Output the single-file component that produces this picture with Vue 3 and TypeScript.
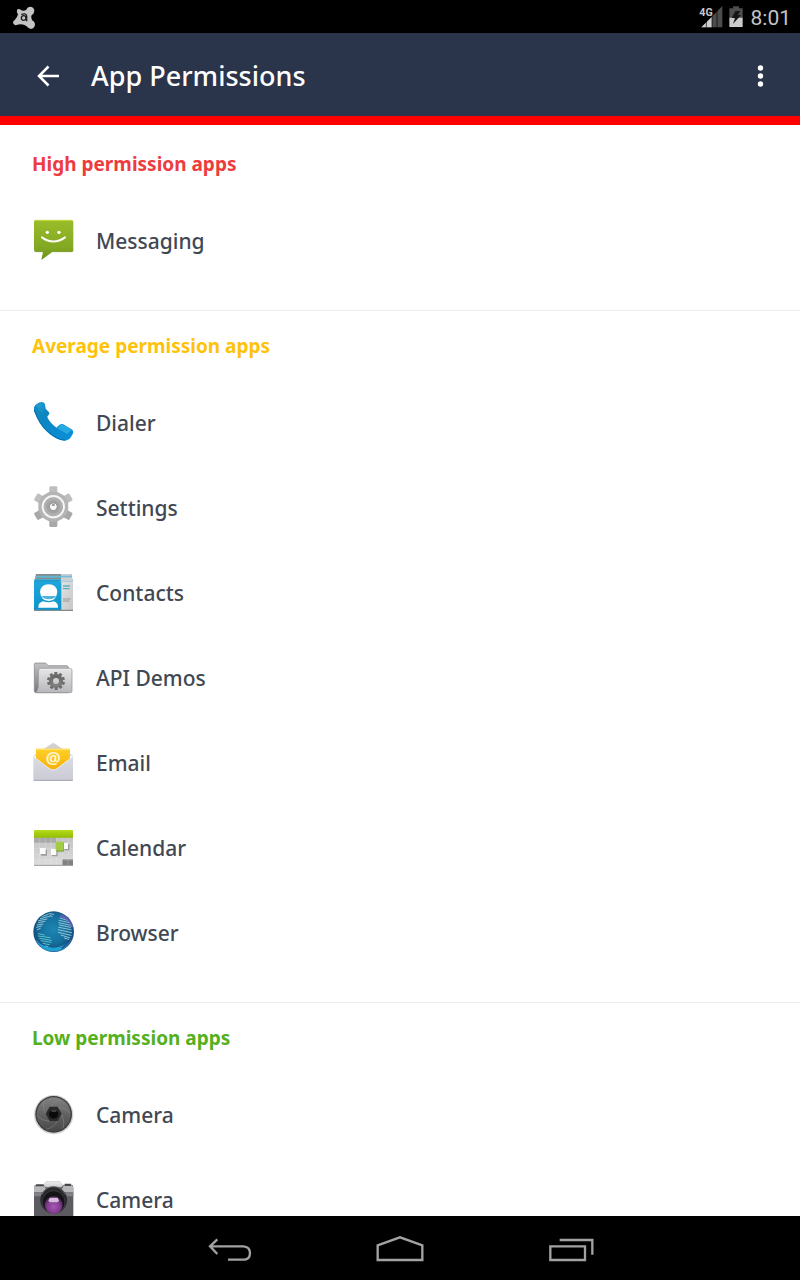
<script setup lang="ts">
type IconName =
  | 'messaging' | 'dialer' | 'settings' | 'contacts' | 'api'
  | 'email' | 'calendar' | 'browser' | 'lens' | 'camera'

interface AppEntry {
  name: string
  icon: IconName
  box: string
}

interface Group {
  title: string
  level: 'high' | 'average' | 'low'
  apps: AppEntry[]
}

const groups: Group[] = [
  {
    title: 'High permission apps',
    level: 'high',
    apps: [{ name: 'Messaging', icon: 'messaging', box: '36 234 132 132' }],
  },
  {
    title: 'Average permission apps',
    level: 'average',
    apps: [
      { name: 'Dialer', icon: 'dialer', box: '36 30 132 132' },
      { name: 'Settings', icon: 'settings', box: '36 285 132 132' },
      { name: 'Contacts', icon: 'contacts', box: '24 30 132 132' },
      { name: 'API Demos', icon: 'api', box: '24 15 132 132' },
      { name: 'Email', icon: 'email', box: '24 15 132 132' },
      { name: 'Calendar', icon: 'calendar', box: '24 15 132 132' },
      { name: 'Browser', icon: 'browser', box: '24 30 132 132' },
    ],
  },
  {
    title: 'Low permission apps',
    level: 'low',
    apps: [
      { name: 'Camera', icon: 'lens', box: '24 21 132 132' },
      { name: 'Camera', icon: 'camera', box: '24 21 132 132' },
    ],
  },
]

const sixth: number[] = [0, 60, 120, 180, 240, 300]
const tenth: number[] = [0, 36, 72, 108, 144, 180, 216, 252, 288, 324]
</script>

<template>
  <div class="screen">
    <svg class="defs" width="0" height="0" aria-hidden="true">
      <defs>
        <linearGradient id="g-msg" x1="0" y1="0" x2="0" y2="1">
          <stop offset="0" stop-color="#9abd2a" /><stop offset="0.7" stop-color="#82a822" /><stop offset="1" stop-color="#6a8f1c" />
        </linearGradient>
        <linearGradient id="g-phone" x1="0" y1="0" x2="0.8" y2="1">
          <stop offset="0" stop-color="#1689bd" /><stop offset="0.45" stop-color="#0b86c4" /><stop offset="1" stop-color="#0a8fd6" />
        </linearGradient>
        <linearGradient id="g-phone-top" x1="0" y1="0" x2="1" y2="1">
          <stop offset="0" stop-color="#25a4d6" /><stop offset="1" stop-color="#0a7dba" />
        </linearGradient>
        <linearGradient id="g-contact" x1="0" y1="0" x2="0" y2="1">
          <stop offset="0" stop-color="#1ea6dc" /><stop offset="1" stop-color="#0b93cb" />
        </linearGradient>
        <linearGradient id="g-page" x1="0" y1="0" x2="1" y2="1">
          <stop offset="0" stop-color="#e4e4e4" /><stop offset="1" stop-color="#c6c6c6" />
        </linearGradient>
        <linearGradient id="g-back" x1="0" y1="0" x2="0" y2="1">
          <stop offset="0" stop-color="#c2c2c4" /><stop offset="1" stop-color="#77777a" />
        </linearGradient>
        <linearGradient id="g-front" x1="0" y1="0" x2="0" y2="1">
          <stop offset="0" stop-color="#e6e6e8" /><stop offset="1" stop-color="#b8b8bc" />
        </linearGradient>
        <linearGradient id="g-mini" gradientUnits="userSpaceOnUse" x1="0" y1="66" x2="0" y2="120">
          <stop offset="0" stop-color="#5c5c5c" /><stop offset="1" stop-color="#8e8e8e" />
        </linearGradient>
        <linearGradient id="g-mail" x1="0" y1="0" x2="0" y2="1">
          <stop offset="0" stop-color="#ffd02a" /><stop offset="1" stop-color="#f5ad00" />
        </linearGradient>
        <linearGradient id="g-env" x1="0" y1="0" x2="0" y2="1">
          <stop offset="0" stop-color="#dcdce4" /><stop offset="1" stop-color="#cacad4" />
        </linearGradient>
        <linearGradient id="g-cal" x1="0" y1="0" x2="0" y2="1">
          <stop offset="0" stop-color="#b5dc1a" /><stop offset="1" stop-color="#93bd05" />
        </linearGradient>
        <linearGradient id="g-grid" x1="0" y1="0" x2="0" y2="1">
          <stop offset="0" stop-color="#c2c2c2" /><stop offset="1" stop-color="#dcdcdc" />
        </linearGradient>
        <radialGradient id="g-globe" cx="0.5" cy="0.45" r="0.56">
          <stop offset="0" stop-color="#1c86b4" /><stop offset="0.6" stop-color="#156e9c" /><stop offset="0.9" stop-color="#15507e" /><stop offset="1" stop-color="#2d6a94" />
        </radialGradient>
        <linearGradient id="g-lens" x1="0" y1="0" x2="0" y2="1">
          <stop offset="0" stop-color="#828282" /><stop offset="0.5" stop-color="#626262" /><stop offset="1" stop-color="#484848" />
        </linearGradient>
        <radialGradient id="g-violet" cx="0.5" cy="0.6" r="0.55">
          <stop offset="0" stop-color="#a858b8" /><stop offset="0.7" stop-color="#7d3a8c" /><stop offset="1" stop-color="#4a2052" />
        </radialGradient>
        <linearGradient id="g-top" x1="0" y1="0" x2="0" y2="1">
          <stop offset="0" stop-color="#f0f0f0" /><stop offset="1" stop-color="#c8c8ca" />
        </linearGradient>
      </defs>
    </svg>

    <div class="status">
      <svg class="badge" viewBox="36 12 72 72" aria-hidden="true">
        <path d="M52 25 Q58 22 64 28 Q72 31 79 26 Q82 17 92 17 Q103 19 103 30 Q102 39 95 42 Q91 49 96 58 Q105 62 105 72 Q103 83 93 84 Q84 83 80 76 Q73 70 62 70 Q54 70 50 72 Q42 74 39 66 Q39 59 45 56 Q52 50 54 40 Q48 32 52 25Z" fill="#c4c4c4" />
        <circle cx="71" cy="51" r="7" fill="none" stroke="#1c1c1c" stroke-width="4" />
        <path d="M64 40Q80 35 80 46V61" fill="none" stroke="#1c1c1c" stroke-width="4" />
      </svg>
      <div class="status-right">
        <svg class="signal" viewBox="57 15 72 66" aria-hidden="true">
          <path d="M64 79L127 15V79Z" fill="#4c4c4c" />
          <path d="M64 79L96 47V79Z" fill="#d0d0d0" />
          <path d="M79 50V79M96 35V79M111 20V79" stroke="#000" stroke-width="2" />
          <rect x="57" y="15" width="38" height="32" fill="#000" />
          <text x="58" y="44" class="net">4G</text>
        </svg>
        <svg class="battery" viewBox="144 15 48 66" aria-hidden="true">
          <path d="M159 16H177V22H188V50H148V22H159Z" fill="#4e4e4e" />
          <path d="M148 50H188V78H148Z" fill="#cacaca" />
          <path d="M166 30L181 30L174 42H183L159 69L165 51H155Z" fill="#161616" />
        </svg>
        <span class="clock">8:01</span>
      </div>
    </div>

    <header class="bar">
      <button class="icon-button back" type="button" aria-label="Back">
        <svg viewBox="0 0 24 24" class="bar-icon" aria-hidden="true">
          <path d="M12.5 2.5L3 12L12.5 21.5M3 12H23" fill="none" stroke="#fff" stroke-width="2.5" />
        </svg>
      </button>
      <h1>App Permissions</h1>
      <button class="icon-button more" type="button" aria-label="More options">
        <svg viewBox="0 0 24 24" class="bar-icon" aria-hidden="true">
          <g fill="#fff"><circle cx="12.5" cy="4" r="2.7" /><circle cx="12.5" cy="12" r="2.7" /><circle cx="12.5" cy="20" r="2.7" /></g>
        </svg>
      </button>
    </header>

    <main class="list">
      <section v-for="group in groups" :key="group.title" class="group">
        <h2 :class="group.level">{{ group.title }}</h2>
        <ul>
          <li v-for="(app, i) in group.apps" :key="i">
            <svg class="app-icon" :viewBox="app.box" aria-hidden="true">
              <g v-if="app.icon === 'messaging'">
                <path d="M48 240H154Q160 240 160 246V329Q160 335 154 335H98L64 360L69 335H48Q42 335 42 329V246Q42 240 48 240Z" fill="url(#g-msg)" />
                <path d="M47 241H155" stroke="#c9dc3a" stroke-width="3" />
                <path d="M43 333Q45 335 49 335H69M98 335H154Q158 335 160 332" fill="none" stroke="#6a8c1e" stroke-width="2" />
                <circle cx="82" cy="277" r="5" fill="#fff" /><circle cx="117" cy="277" r="5" fill="#fff" />
                <path d="M66 292Q100 317 135 292" fill="none" stroke="#fff" stroke-width="6" stroke-linecap="round" />
              </g>
              <g v-else-if="app.icon === 'dialer'">
                <path d="M42 52Q48 38 66 36Q73 37 75 43L77 56L87 67Q90 71 86 75Q80 78 83 84Q92 101 110 113Q116 103 128 102L157 119Q162 127 156 136Q148 153 132 152Q105 148 81 125Q57 104 42 63Z" fill="url(#g-phone)" />
                <path d="M48 48Q54 39 66 38Q72 39 73 44L75 57L85 68Q80 72 76 76L58 62Z" fill="url(#g-phone-top)" />
                <path d="M113 116Q117 104 128 103L157 120Q147 124 142 132Z" fill="#27a9e2" />
                <path d="M43 60Q58 103 84 125Q112 150 135 150" fill="none" stroke="#0670a8" stroke-width="3" />
              </g>
              <g v-else-if="app.icon === 'settings'">
                <path v-for="a in sixth" :key="a" d="M80 314L88 305V292Q89 289 92 289H108Q112 289 112 292V305L120 314Z" :transform="`rotate(${a} 100 350)`" :fill="a > 60 && a < 300 ? '#a8a8a8' : '#bebebe'" />
                <circle cx="100" cy="350" r="45" fill="#b4b4b4" />
                <circle cx="100" cy="350" r="32" fill="#b0b0b0" stroke="#f6f6f6" stroke-width="6" />
                <circle cx="100" cy="350" r="21" fill="#a4a4a4" />
                <circle cx="100" cy="350" r="12" fill="#f8f8f8" stroke="#8c8c8c" stroke-width="3" />
                <path d="M96 341H104V348H96Z" fill="#9c9c9c" />
              </g>
              <g v-else-if="app.icon === 'contacts'">
                <path d="M36 42H144V58H33Z" fill="#858b8e" />
                <path d="M35 47H143V53H34Z" fill="#62b6d2" />
                <path d="M31 58H146V66H30Z" fill="#1c9bcb" />
                <path d="M111 42H143L146 64H111Z" fill="#cbd1d3" /><path d="M111 47H144V52H111Z" fill="#70bdd5" />
                <path d="M108 64H147V151H108Z" fill="url(#g-page)" />
                <path d="M30 65H112V151H30Z" fill="url(#g-contact)" />
                <path d="M30 149H147V153H30Z" fill="#828a8d" />
                <path d="M43 143Q42 128 57 124Q74 130 89 124Q103 128 102 143Z" fill="#fff" />
                <path d="M48 96Q50 74 74 73Q98 74 100 96Q97 122 74 123Q51 122 48 96Z" fill="#fff" />
                <path d="M52 108H96Q90 118 74 118Q58 117 52 108Z" fill="#1599cf" opacity=".75" />
                <path d="M117 78H138M117 86H137" stroke="#5caec7" stroke-width="4" />
                <path d="M117 117H140M117 123H136" stroke="#999" stroke-width="3" />
              </g>
              <g v-else-if="app.icon === 'api'">
                <path d="M31 43Q31 39 36 39H63Q66 39 68 42L72 47H128Q133 47 133 52V128H36Q31 128 31 122Z" fill="url(#g-back)" stroke="#808082" stroke-width="2" />
                <path d="M43 65Q43 56 50 55H139Q144 56 144 61V123Q144 128 138 128H34Q40 124 43 112Z" fill="url(#g-front)" stroke="#8e8e90" stroke-width="2" />
                <path d="M47 58H141" stroke="#f3f3f3" stroke-width="2" />
                <circle cx="96" cy="93" r="15" fill="none" stroke="url(#g-mini)" stroke-width="12" />
                <rect v-for="a in tenth" :key="a" x="91" y="66" width="9" height="10" fill="#6d6d6d" :transform="`rotate(${a} 96 93)`" />
              </g>
              <g v-else-if="app.icon === 'email'">
                <path d="M28 62L88 23L147 62Z" fill="#d3d0ce" />
                <path d="M36 41H138V90L88 112L36 88Z" fill="url(#g-mail)" />
                <path d="M36 43H138" stroke="#ffe069" stroke-width="4" />
                <path d="M28 63L72 97Q88 110 103 97L147 63V134Q147 138 142 138H33Q28 138 28 134Z" fill="url(#g-env)" />
                <path d="M29 65L72 98Q88 111 103 98L146 65" fill="none" stroke="#f5f3ee" stroke-width="2" />
                <path d="M29 136H146" stroke="#a9a9b3" stroke-width="3" />
                <text x="88" y="86" class="at">@</text>
              </g>
              <g v-else-if="app.icon === 'calendar'">
                <path d="M30 50H147V136H30Z" fill="url(#g-grid)" />
                <path d="M30 52H96V69H30Z" fill="#aaaaaa" />
                <path d="M115 118H147V136H115Z" fill="#808080" />
                <path d="M47 52V136M64 52V136M81 52V136M98 52V136M115 52V136M132 52V136M30 69H147M30 86H147M30 103H147M30 120H147" stroke="#f4f4f4" stroke-opacity=".35" stroke-width="2" />
                <path d="M51 89H69V107H51ZM84 91H101V109H84ZM121 73H136V91H121Z" fill="#9c9c9c" />
                <path d="M48 84H65V102H48ZM81 87H97V105H81ZM117 69H132V87H117Z" fill="#fafafa" />
                <path d="M97 68H120V95H97Z" fill="#87a83b" /><path d="M95 65H118V91H95Z" fill="#a4cb45" />
                <path d="M30 32Q30 30 33 30H144Q147 30 147 32V53H30Z" fill="url(#g-cal)" />
                <path d="M30 136H147" stroke="#989898" stroke-width="3" />
              </g>
              <g v-else-if="app.icon === 'browser'">
                <circle cx="89" cy="95" r="61" fill="url(#g-globe)" />
                <path d="M35 116Q50 154 89 154Q128 154 145 112Q126 141 89 143Q52 142 35 116Z" fill="#1f9fd2" />
                <g fill="none" stroke="#8fc3d6" stroke-width="3" stroke-linecap="round">
                  <path d="M56 49L73 43M49 56L79 48M44 62L69 57M43 68L63 64M40 75L57 72M38 82L52 78M40 89L49 85" />
                  <path d="M76 41L89 43M79 47L85 50" />
                  <path d="M108 54L130 61M105 61L136 68M104 68L141 76M106 75L140 82M104 82L141 89M102 89L143 98M103 97L141 106M111 105L139 114M121 114L137 119" />
                </g>
                <g fill="none" stroke="#58c0c8" stroke-width="3" stroke-linecap="round"><path d="M43 101L61 105M43 108L78 113M47 115L82 121M51 122L81 127M57 130L76 134M64 138L72 140" /></g>
                <path d="M109 46Q136 55 144 81" fill="none" stroke="#8260ca" stroke-width="7" stroke-opacity=".75" />
                <path d="M141 113Q132 133 113 145" fill="none" stroke="#223775" stroke-width="5" stroke-opacity=".7" />
              </g>
              <g v-else-if="app.icon === 'lens'">
                <circle cx="89" cy="89" r="59" fill="#d2d2d2" /><circle cx="89" cy="88" r="55" fill="#3d3d3d" /><circle cx="89" cy="88" r="51" fill="url(#g-lens)" />
                <path v-for="a in sixth" :key="a" d="M78 68Q88 48 112 43" fill="none" stroke="#8c8c8c" stroke-width="1.5" :transform="`rotate(${a} 89 88)`" />
                <path d="M77 65H101L113 86L101 108H77L65 86Z" fill="#2a2a2a" />
                <circle cx="89" cy="87" r="14" fill="#0a0a0a" /><path d="M80 77Q90 69 99 77L95 81H84Z" fill="#3c4240" />
              </g>
              <g v-else>
                <path d="M61 42L66 35H108L114 43L119 52H57Z" fill="url(#g-top)" stroke="#c4c4c4" stroke-width="2" />
                <path d="M30 50Q31 45 38 45H59L65 52H112L119 44H143Q148 45 148 55V140H30Z" fill="#5c5c60" />
                <path d="M30 52Q31 47 38 47H61L69 67H30ZM110 67L119 46H142Q148 47 148 55V67Z" fill="#b7b7ba" />
                <path d="M36 43H59V49H36ZM122 41H141V48H122Z" fill="#47474a" />
                <path d="M30 67H55V79H30ZM123 67H148V79H123Z" fill="#808085" />
                <circle cx="89" cy="90" r="40" fill="#29292c" /><circle cx="89" cy="96" r="34" fill="#141416" stroke="#48484d" stroke-width="2" />
                <circle cx="89" cy="105" r="27" fill="url(#g-violet)" />
                <path d="M73 92L77 83H101L105 92L101 97H77Z" fill="#d3bdd9" />
                <path d="M54 73Q67 49 89 50Q111 50 123 73" fill="none" stroke="#66666a" stroke-width="3" />
              </g>
            </svg>
            <span class="app-name">{{ app.name }}</span>
          </li>
        </ul>
      </section>
    </main>

    <nav class="nav">
      <button type="button" aria-label="Back">
        <svg viewBox="51 78 132 78" class="nav-icon" aria-hidden="true"><path d="M82 88L60 109L82 132M60 109H160Q180 110 180 130Q179 149 160 149H114" fill="none" stroke="#a2a2a2" stroke-width="7" /></svg>
      </button>
      <button type="button" aria-label="Home">
        <svg viewBox="564 78 132 78" class="nav-icon" aria-hidden="true"><path d="M563 150V106L630 82L697 106V150Z" fill="none" stroke="#a2a2a2" stroke-width="7" /></svg>
      </button>
      <button type="button" aria-label="Recent apps">
        <svg viewBox="1077 78 132 78" class="nav-icon" aria-hidden="true"><path d="M1081 109H1185V150H1081ZM1109 90H1207V134" fill="none" stroke="#a2a2a2" stroke-width="7" /></svg>
      </button>
    </nav>
  </div>
</template>

<style>
body { margin: 0; background: #fff; }
</style>

<style scoped>
.screen {
  display: flex;
  flex-direction: column;
  height: 100vh;
  overflow: hidden;
  background: #fff;
  color: #414853;
  font-family: "Noto Sans", "Open Sans", sans-serif;
}
.defs { position: absolute; }
svg { flex: none; display: block; }
button { border: 0; padding: 0; background: none; cursor: pointer; }
.status {
  display: flex;
  align-items: center;
  justify-content: space-between;
  flex: none;
  height: 33px;
  padding: 0 9px 0 12px;
  background: #000;
}
.badge { width: 24px; height: 24px; }
.status-right { display: flex; align-items: center; }
.signal { width: 24px; height: 22px; }
.battery { width: 16px; height: 22px; margin: 0 7px 0 5px; }
.net { font: bold 32px Roboto, sans-serif; fill: #c8c8c8; }
.clock { font: 21px/29px Roboto, sans-serif; color: #c4c4c4; padding-top: 4px; }
.bar {
  display: flex;
  align-items: center;
  flex: none;
  height: 81px;
  padding: 2px 28px 0 36px;
  background: #2a344b;
  border-bottom: 9px solid #f00;
}
.bar-icon { width: 24px; height: 24px; }
h1 {
  flex: 1;
  margin: 0 0 0 31px;
  color: #fff;
  font-size: 27px;
  font-weight: 500;
  line-height: 40px;
}
.list {
  flex: 1;
  min-height: 0;
  padding-top: 4px;
  overflow-y: auto;
  scrollbar-width: none;
}
.group { padding-bottom: 27px; border-bottom: 1px solid #ececec; }
h2 {
  margin: 0;
  padding: 20px 32px 19px;
  font-size: 19px;
  font-weight: 700;
  line-height: 30px;
}
.high { color: #ee3b3e; }
.average { color: #ffc20a; }
.low { color: #54b01c; }
ul { margin: 0; padding: 0; list-style: none; }
li {
  display: flex;
  align-items: center;
  gap: 20px;
  padding: 20px 32px 21px;
  font-size: 21px;
  font-weight: 500;
  line-height: 30px;
}
.app-name { padding-top: 2px; }
.app-icon { width: 44px; height: 44px; }
.at { font: bold 50px "Noto Sans", sans-serif; fill: #fff4cc; text-anchor: middle; }
.nav {
  display: flex;
  justify-content: center;
  flex: none;
  height: 64px;
  background: #000;
}
.nav button {
  display: flex;
  justify-content: center;
  align-items: center;
  width: 171px;
  padding-top: 2px;
}
.nav-icon { width: 44px; height: 26px; overflow: visible; }
</style>
